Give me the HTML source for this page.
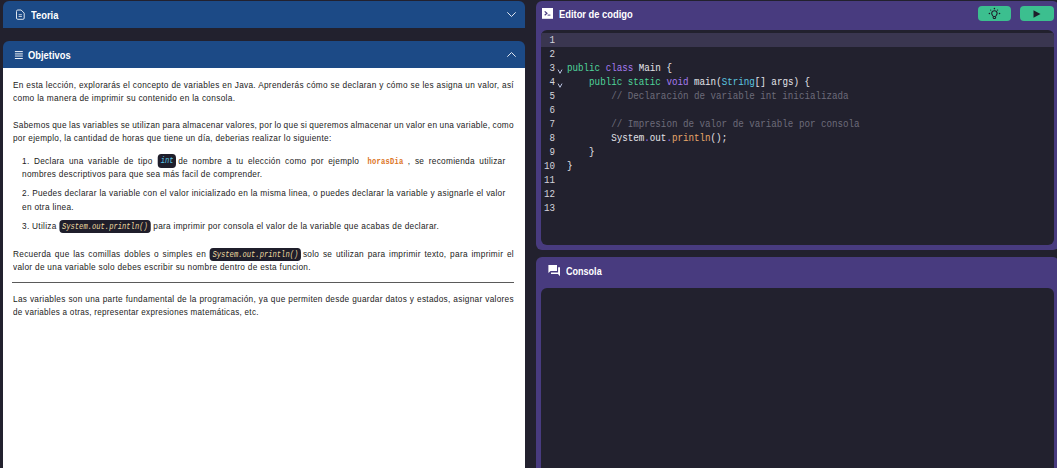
<!DOCTYPE html>
<html><head><meta charset="utf-8">
<style>
*{box-sizing:border-box;margin:0;padding:0}
html,body{width:1057px;height:468px;overflow:hidden;background:#22212e;font-family:"Liberation Sans",sans-serif}
.abs{position:absolute}
.blue{background:#1c4a86;color:#fff}
.hdr{position:absolute;left:3px;width:522px;border-radius:6px 6px 0 0}
.htitle{position:absolute;font-weight:bold;font-size:10.4px;color:#fff;white-space:nowrap;line-height:12px;transform:scaleX(0.9);transform-origin:0 0}
#content{position:absolute;left:3px;top:68px;width:522px;height:410px;background:#fff}
.tl{position:absolute;font-size:9.5px;line-height:13px;color:#222;letter-spacing:0.34px;transform:scaleX(0.87);transform-origin:0 0;white-space:normal}
.j{text-align:justify;text-align-last:justify;word-spacing:-1px}
.cb{display:inline-block;background:#1f1e2b;border-radius:4px;font-family:"Liberation Mono",monospace;font-style:italic;font-size:8.2px;letter-spacing:0.02px;line-height:13.5px;padding:0 3.3px 0 3.1px;word-spacing:0;vertical-align:0.2px}
.hd{font-family:"Liberation Mono",monospace;font-weight:bold;font-size:8.2px;letter-spacing:0.25px;color:#dc7424;word-spacing:0;margin-left:4.3px}
.purple{background:#483b7f}
.codearea{position:absolute;left:5px;background:#22212e;border-radius:6px}
.ln{position:absolute;left:0;width:14px;text-align:right;font-family:"Liberation Mono",monospace;font-size:10px;color:#d4d4dc;line-height:14px;transform:scaleX(0.92);transform-origin:100% 0}
.code{position:absolute;font-family:"Liberation Mono",monospace;font-size:10px;line-height:14px;color:#e4e4ea;white-space:pre;transform:scaleX(0.92);transform-origin:0 0}
.kw{color:#4fd49a}.pu{color:#a77cf0}.ty{color:#5cc6e0}.cm{color:#6d6c7a}.fn{color:#e8a86a}.dot{color:#8f6cf0}
.btn{position:absolute;top:4.8px;height:15.6px;background:#3cbf8f;border-radius:4px}
</style></head><body>
<!-- Left column -->
<div class="hdr blue" style="top:1px;height:27px"></div>
<svg class="abs" style="left:13px;top:7px" width="15" height="15" viewBox="0 0 15 15">
 <path d="M4.8 3 H8.1 L11.2 6.1 V11 Q11.2 12.3 9.9 12.3 H4.8 Q3.5 12.3 3.5 11 V4.3 Q3.5 3 4.8 3 Z" fill="none" stroke="#dde4ee" stroke-width="1"/>
 <path d="M5.6 7.7 H8.9 M5.6 9.5 H8.9" stroke="#dde4ee" stroke-width="0.85"/>
</svg>
<div class="htitle" style="left:31px;top:10.3px">Teoria</div>
<svg class="abs" style="left:506px;top:11px" width="11" height="7" viewBox="0 0 11 7"><path d="M1.3 1.3 L5.5 5.5 L9.7 1.3" fill="none" stroke="#dfe6f0" stroke-width="1"/></svg>

<div class="hdr blue" style="top:41px;height:27px"></div>
<svg class="abs" style="left:12px;top:48px" width="14" height="14" viewBox="0 0 14 14">
 <rect x="2.9" y="5.6" width="7.9" height="2.7" fill="#dde4ee" opacity="0.45"/>
 <path d="M2.9 3.6 H10.8 M2.9 10.5 H10.8" stroke="#f0f3f8" stroke-width="1"/>
 <path d="M2.9 5.5 H10.8 M2.9 8.4 H10.8" stroke="#dde4ee" stroke-width="0.8" opacity="0.7"/>
</svg>
<div class="htitle" style="left:28px;top:49.8px">Objetivos</div>
<svg class="abs" style="left:506px;top:51px" width="11" height="7" viewBox="0 0 11 7"><path d="M1.3 5.7 L5.5 1.5 L9.7 5.7" fill="none" stroke="#dfe6f0" stroke-width="1"/></svg>

<div id="content"></div>
<div class="tl j" style="left:12.5px;top:77.9px;width:575.8px">En esta lección, explorarás el concepto de variables en Java. Aprenderás cómo se declaran y cómo se les asigna un valor, así</div>
<div class="tl" style="left:12.5px;top:90.7px;width:575.8px;transform:scaleX(0.8755)">como la manera de imprimir su contenido en la consola.</div>
<div class="tl j" style="left:12.5px;top:118.0px;width:575.8px">Sabemos que las variables se utilizan para almacenar valores, por lo que si queremos almacenar un valor en una variable, como</div>
<div class="tl" style="left:12.5px;top:130.7px;width:575.8px;transform:scaleX(0.8646)">por ejemplo, la cantidad de horas que tiene un día, deberias realizar lo siguiente:</div>
<div class="tl j" style="left:21.5px;top:153.5px;width:555.8px">1. Declara una variable de tipo <span class="cb" style="color:#5ec8e8;margin-left:1px;margin-right:2px">int</span>de nombre a tu elección como por ejemplo <b class="hd">horasDia</b> , se recomienda utilizar</div>
<div class="tl" style="left:21.5px;top:167.3px;width:555.8px;transform:scaleX(0.87)">nombres descriptivos para que sea más facil de comprender.</div>
<div class="tl j" style="left:21.5px;top:186.2px;width:555.8px">2. Puedes declarar la variable con el valor inicializado en la misma linea, o puedes declarar la variable y asignarle el valor</div>
<div class="tl" style="left:21.5px;top:199.6px;width:555.8px">en otra linea.</div>
<div class="tl" style="left:21.5px;top:218.7px;width:555.8px">3. Utiliza <span class="cb" style="color:#ecd9a0">System.out.println()</span> para imprimir por consola el valor de la variable que acabas de declarar.</div>
<div class="tl j" style="left:12.5px;top:246.9px;width:575.8px">Recuerda que las comillas dobles o simples en <span class="cb" style="color:#ecd9a0;margin-right:2px">System.out.println()</span>solo se utilizan para imprimir texto, para imprimir el</div>
<div class="tl" style="left:12.5px;top:259.7px;width:575.8px">valor de una variable solo debes escribir su nombre dentro de esta funcion.</div>
<div class="abs" style="left:12px;top:282px;width:501.5px;height:1px;background:#5a5a5a"></div>
<div class="tl j" style="left:12.5px;top:292.0px;width:575.8px">Las variables son una parte fundamental de la programación, ya que permiten desde guardar datos y estados, asignar valores</div>
<div class="tl" style="left:12.5px;top:305.4px;width:575.8px;transform:scaleX(0.85)">de variables a otras, representar expresiones matemáticas, etc.</div>

<!-- Right column: editor -->
<div class="abs purple" style="left:536px;top:1px;width:523px;height:248.5px;border-radius:6px">
 <svg class="abs" style="left:6px;top:7.2px" width="11" height="11" viewBox="0 0 11 11">
  <rect x="0" y="0" width="11" height="10.8" fill="#fff"/>
  <path d="M2.7 3.4 L4.9 5.3 L2.7 7.2" fill="none" stroke="#483b7f" stroke-width="1.25"/>
  <path d="M5.6 7.1 H8.4" stroke="#483b7f" stroke-width="1"/>
 </svg>
 <div class="htitle" style="left:23px;top:8.1px">Editor de codigo</div>
 <div class="btn" style="left:441.5px;width:33.5px">
  <svg class="abs" style="left:8.5px;top:0px" width="17" height="15" viewBox="0 0 17 15">
   <path d="M6.9 10.1 C6.6 9.3 5.7 8.7 5.7 7.3 C5.7 5.8 6.9 4.8 8.4 4.8 C9.9 4.8 11.1 5.8 11.1 7.3 C11.1 8.7 10.2 9.3 9.9 10.1" fill="none" stroke="#1e1d2a" stroke-width="1.05"/>
   <rect x="7.2" y="10.5" width="2.4" height="1.9" rx="0.6" fill="none" stroke="#1e1d2a" stroke-width="1.05"/>
   <circle cx="8.4" cy="2.6" r="0.8" fill="#1e1d2a"/><circle cx="3.4" cy="7.5" r="0.8" fill="#1e1d2a"/><circle cx="13.5" cy="7.5" r="0.8" fill="#1e1d2a"/>
   <circle cx="4.7" cy="4.1" r="0.65" fill="#1e1d2a"/><circle cx="11.6" cy="4.1" r="0.65" fill="#1e1d2a"/>
  </svg>
 </div>
 <div class="btn" style="left:484px;width:34px">
  <svg class="abs" style="left:13px;top:4px" width="8" height="8" viewBox="0 0 8 8"><path d="M0.5 0.3 L7.5 4 L0.5 7.7 Z" fill="#1e1d2a"/></svg>
 </div>
 <div class="codearea" style="top:29px;width:513px;height:215px;overflow:hidden">
  <div class="abs" style="left:0;top:2.5px;width:513px;height:14.5px;background:#3a3650"></div>
  <div class="ln" style="top:3.5px">1</div>
  <div class="ln" style="top:17.5px">2</div>
  <div class="ln" style="top:31.5px">3</div>
  <div class="ln" style="top:45.5px">4</div>
  <div class="ln" style="top:59.5px">5</div>
  <div class="ln" style="top:73.5px">6</div>
  <div class="ln" style="top:87.5px">7</div>
  <div class="ln" style="top:101.5px">8</div>
  <div class="ln" style="top:115.5px">9</div>
  <div class="ln" style="top:129.5px">10</div>
  <div class="ln" style="top:143.5px">11</div>
  <div class="ln" style="top:157.5px">12</div>
  <div class="ln" style="top:171.5px">13</div>
  <svg class="abs" style="left:16px;top:38.5px" width="6" height="5" viewBox="0 0 6 5"><path d="M1 0.6 L3 4.3 L5 0.6" fill="none" stroke="#b8c2e0" stroke-width="1"/></svg>
  <svg class="abs" style="left:16px;top:52.5px" width="6" height="5" viewBox="0 0 6 5"><path d="M1 0.6 L3 4.3 L5 0.6" fill="none" stroke="#b8c2e0" stroke-width="1"/></svg>
  <div class="code" style="left:25.7px;top:31.5px"><span class="kw">public</span> <span class="pu">class</span> Main {
    <span class="kw">public</span> <span class="kw">static</span> <span class="pu">void</span> main(<span class="ty">String</span>[] args) {
        <span class="cm">// Declaración de variable int inicializada</span>

        <span class="cm">// Impresion de valor de variable por consola</span>
        System<span class="dot">.</span>out<span class="dot">.</span><span class="fn">println</span>();
    }
}</div>
 </div>
</div>

<!-- Console -->
<div class="abs purple" style="left:536px;top:257px;width:523px;height:240px;border-radius:6px">
 <svg class="abs" style="left:12.2px;top:8px" width="13" height="12" viewBox="0 0 13 12">
  <path d="M0.4 0 H9 V5.9 H2.6 L0.4 8 Z" fill="#fff"/>
  <path d="M10.1 2.2 H12 V11.2 L10 9.1 H3 V7.5 H10.1 Z" fill="#fff"/>
 </svg>
 <div class="htitle" style="left:29.5px;top:9px;transform:scaleX(0.87)">Consola</div>
 <div class="codearea" style="top:31px;width:513px;height:300px"></div>
</div>
</body></html>
